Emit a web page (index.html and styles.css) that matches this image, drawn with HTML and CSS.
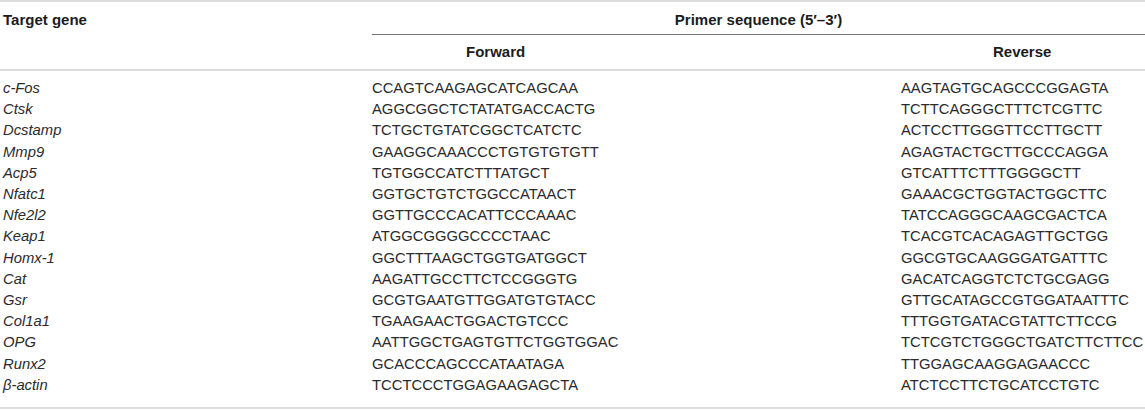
FILE: index.html
```html
<!DOCTYPE html>
<html>
<head>
<meta charset="utf-8">
<link rel="stylesheet" href="styles.css">
</head>
<body>
<table class="primers">
  <colgroup>
    <col class="c-gene">
    <col class="c-fwd">
    <col class="c-rev">
  </colgroup>
  <thead>
    <tr class="h1">
      <th class="gene-h" rowspan="2">Target gene</th>
      <th class="span-h" colspan="2">Primer sequence (5′–3′)</th>
    </tr>
    <tr class="h2">
      <th class="fwd-h">Forward</th>
      <th class="rev-h">Reverse</th>
    </tr>
  </thead>
  <tbody>
    <tr><td class="gene">c-Fos</td><td>CCAGTCAAGAGCATCAGCAA</td><td>AAGTAGTGCAGCCCGGAGTA</td></tr>
    <tr><td class="gene">Ctsk</td><td>AGGCGGCTCTATATGACCACTG</td><td>TCTTCAGGGCTTTCTCGTTC</td></tr>
    <tr><td class="gene">Dcstamp</td><td>TCTGCTGTATCGGCTCATCTC</td><td>ACTCCTTGGGTTCCTTGCTT</td></tr>
    <tr><td class="gene">Mmp9</td><td>GAAGGCAAACCCTGTGTGTGTT</td><td>AGAGTACTGCTTGCCCAGGA</td></tr>
    <tr><td class="gene">Acp5</td><td>TGTGGCCATCTTTATGCT</td><td>GTCATTTCTTTGGGGCTT</td></tr>
    <tr><td class="gene">Nfatc1</td><td>GGTGCTGTCTGGCCATAACT</td><td>GAAACGCTGGTACTGGCTTC</td></tr>
    <tr><td class="gene">Nfe2l2</td><td>GGTTGCCCACATTCCCAAAC</td><td>TATCCAGGGCAAGCGACTCA</td></tr>
    <tr><td class="gene">Keap1</td><td>ATGGCGGGGCCCCTAAC</td><td>TCACGTCACAGAGTTGCTGG</td></tr>
    <tr><td class="gene">Homx-1</td><td>GGCTTTAAGCTGGTGATGGCT</td><td>GGCGTGCAAGGGATGATTTC</td></tr>
    <tr><td class="gene">Cat</td><td>AAGATTGCCTTCTCCGGGTG</td><td>GACATCAGGTCTCTGCGAGG</td></tr>
    <tr><td class="gene">Gsr</td><td>GCGTGAATGTTGGATGTGTACC</td><td>GTTGCATAGCCGTGGATAATTTC</td></tr>
    <tr><td class="gene">Col1a1</td><td>TGAAGAACTGGACTGTCCC</td><td>TTTGGTGATACGTATTCTTCCG</td></tr>
    <tr><td class="gene">OPG</td><td>AATTGGCTGAGTGTTCTGGTGGAC</td><td>TCTCGTCTGGGCTGATCTTCTTCC</td></tr>
    <tr><td class="gene">Runx2</td><td>GCACCCAGCCCATAATAGA</td><td>TTGGAGCAAGGAGAACCC</td></tr>
    <tr class="last"><td class="gene">β-actin</td><td>TCCTCCCTGGAGAAGAGCTA</td><td>ATCTCCTTCTGCATCCTGTC</td></tr>
  </tbody>
</table>
</body>
</html>
```

FILE: styles.css
```css
html, body {
  margin: 0;
  padding: 0;
  background: #ffffff;
}

body {
  font-family: "Liberation Sans", Arial, Helvetica, sans-serif;
  font-size: 14.8px;
  color: #2b2b2b;
}

.primers {
  width: 1145px;
  border-collapse: collapse;
  table-layout: fixed;
  border-top: 2px solid #dcdcdc;
  border-bottom: 2px solid #dcdcdc;
}

.c-gene { width: 372px; }
.c-fwd { width: 529px; }
.c-rev { width: 244px; }

th {
  font-size: 15px;
  font-weight: bold;
  color: #1c1c1c;
  line-height: 16px;
  padding: 0;
  text-align: left;
  white-space: nowrap;
}

.h1 th {
  padding-top: 10px;
  padding-bottom: 6px;
}

.gene-h {
  vertical-align: top;
  padding-left: 3px;
  border-bottom: 2px solid #dcdcdc;
}

.span-h {
  text-align: center;
  border-bottom: 1px solid #777777;
}

.h2 th {
  padding-top: 9px;
  padding-bottom: 9px;
  border-bottom: 2px solid #dcdcdc;
}

.fwd-h { padding-left: 94px; }
.rev-h { padding-left: 92px; }

td {
  padding: 0;
  line-height: 21.2px;
  white-space: nowrap;
}

tbody tr:first-child td { padding-top: 7px; }
tbody tr.last td { padding-bottom: 11px; }

td.gene {
  font-style: italic;
  padding-left: 3px;
}
```
